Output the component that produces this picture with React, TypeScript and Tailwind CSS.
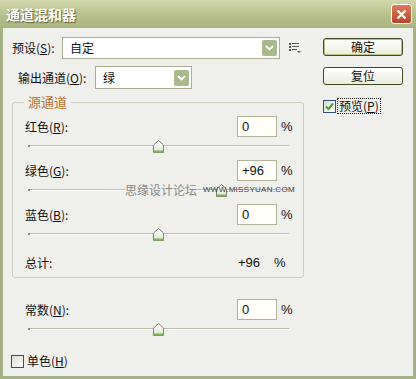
import React from "react";

const cjk = "font-['Noto_Sans_CJK_SC','Liberation_Sans',sans-serif]";
const latin = "font-['Liberation_Sans','DejaVu_Sans',sans-serif]";

const Key = ({ text, k }: { text: string; k: string }) => (
  <span>
    {text}(<span className="underline">{k}</span>):
  </span>
);

const Arrow = () => (
  <div className="mr-[2px] flex h-[16px] w-[15px] items-center justify-center rounded-[2px] bg-[#a8b98c]">
    <svg width="9" height="6" viewBox="0 0 9 6">
      <path d="M1 1 L4.5 4.5 L8 1" fill="none" stroke="#fff" strokeWidth="1.8" />
    </svg>
  </div>
);

const Select = ({ value, className }: { value: string; className: string }) => (
  <div className={`flex items-center justify-between border border-[#a9ae94] bg-white pl-[7px] ${className}`}>
    <span>{value}</span>
    <Arrow />
  </div>
);

const Thumb = () => (
  <svg width="11" height="13" viewBox="0 0 11 13">
    <defs>
      <linearGradient id="tg" x1="0" y1="0" x2="0" y2="1">
        <stop offset="0" stopColor="#ffffff" />
        <stop offset="1" stopColor="#dde4d2" />
      </linearGradient>
    </defs>
    <path d="M0.5 5 L5.5 0.5 L10.5 5 L10.5 12.5 L0.5 12.5 Z" fill="url(#tg)" stroke="#7c8670" />
    <rect x="1" y="10.5" width="9" height="2" fill="#7fb553" />
  </svg>
);

// value runs from -200 to +200, thumb sits at that fraction of the track
const Slider = ({ value, children }: { value: number; children?: React.ReactNode }) => {
  const pct = ((value + 200) / 400) * 100;
  return (
    <div className="relative mt-[3px] ml-[3px] h-[12px] w-[261px]">
      <div className="absolute left-0 right-0 top-[5px] h-[2px] border-b border-white bg-[#bdbdb0]" />
      <div className="absolute left-0 top-[5px] h-[2px] w-[2px] bg-[#888]" />
      <div className="absolute top-0" style={{ left: `calc(${pct}% - 5.5px)` }}>
        <Thumb />
      </div>
      {children}
    </div>
  );
};

const Input = ({ value }: { value: string }) => (
  <div className={`flex h-[21px] w-[40px] items-center border border-[#aeb397] bg-[#fffff8] pl-[4px] text-[13px] text-[#111] ${latin}`}>
    {value}
  </div>
);

const Row = ({ label, value, mt }: { label: React.ReactNode; value: string; mt: string }) => (
  <div className={`flex h-[21px] items-center ${mt}`}>
    <div className="flex-1">{label}</div>
    <Input value={value} />
    <span className={`ml-[4px] w-[14px] text-[13px] ${latin}`}>%</span>
  </div>
);

const CheckBox = ({ checked }: { checked?: boolean }) => (
  <div className="flex h-[13px] w-[13px] items-center justify-center border border-[#35506e] bg-linear-to-br from-[#dcdcd4] to-white">
    {checked && (
      <svg width="9" height="9" viewBox="0 0 9 9">
        <path d="M1 4.5 L3.5 7 L8 1.5" fill="none" stroke="#3da32e" strokeWidth="2" />
      </svg>
    )}
  </div>
);

const Button = ({ label, primary }: { label: string; primary?: boolean }) => (
  <div
    className={`flex h-[18px] w-[80px] items-center justify-center rounded-[3px] border border-[#3e4a22] bg-linear-to-b from-white to-[#ecebdc] text-[12px] ${
      primary ? "shadow-[inset_0_0_0_1px_#b3c486]" : ""
    }`}
  >
    {label}
  </div>
);

export default function App() {
  return (
    <div className={`flex h-[379px] w-[416px] flex-col text-[12px] text-[#111] ${cjk}`}>
      {/* title bar */}
      <div className="flex h-[28px] items-center justify-between bg-linear-to-b from-[#d3d9ad] via-[#b9c18f] to-[#aab37d] pl-[6px] pr-[4px]">
        <span className="text-[14px] font-bold text-white [text-shadow:1px_1px_1px_#5b6438]">通道混和器</span>
        <div className="flex h-[20px] w-[21px] items-center justify-center rounded-[3px] border border-white bg-linear-to-b from-[#e07b5c] to-[#b9442b]">
          <svg width="11" height="11" viewBox="0 0 11 11">
            <path d="M1.5 1.5 L9.5 9.5 M9.5 1.5 L1.5 9.5" stroke="#fff" strokeWidth="2.2" />
          </svg>
        </div>
      </div>

      <div className="flex flex-1 border-x-[3px] border-b-[3px] border-[#a7b083] bg-[#efefec]">
        {/* left column */}
        <div className="flex w-[301px] flex-col pl-[9px] pt-[9px]">
          <div className="flex h-[22px] items-center">
            <div className="w-[50px]">
              <Key text="预设" k="S" />
            </div>
            <Select value="自定" className="h-[22px] w-[218px]" />
            <svg className="ml-[9px]" width="13" height="11" viewBox="0 0 13 11">
              <g fill="#555">
                <rect x="0" y="0" width="2" height="2" />
                <rect x="3" y="0" width="7" height="1" />
                <rect x="0" y="3" width="2" height="2" />
                <rect x="3" y="3" width="7" height="1" />
                <rect x="0" y="6" width="2" height="2" />
                <rect x="3" y="6" width="5" height="1" />
                <path d="M8 8 L12 8 L10 10 Z" />
              </g>
            </svg>
          </div>

          <div className="mt-[7px] flex h-[23px] items-center pl-[6px]">
            <div className="w-[77px]">
              <Key text="输出通道" k="O" />
            </div>
            <Select value="绿" className="h-[23px] w-[97px]" />
          </div>

          <fieldset className="mt-[6px] w-[292px] rounded-[3px] border border-[#cdcdbd]">
            <legend className="ml-[11px] px-[4px] text-[13px] leading-[14px] text-[#b5752f]">源通道</legend>
            <div className="pl-[12px] pr-[8px] pt-[7px] pb-[4px]">
              <Row label={<Key text="红色" k="R" />} value="0" mt="" />
              <Slider value={0} />
              <Row label={<Key text="绿色" k="G" />} value="+96" mt="mt-[8px]" />
              <Slider value={96}>
                {/* forum watermark baked into the screenshot */}
                <span className="absolute left-[97px] top-[-4px] bg-[#efefec] leading-[20px] text-[#8a8a84]">
                  思缘设计论坛
                </span>
                <span
                  className={`absolute left-[175px] top-[1px] text-[8px] leading-[10px] tracking-[0.3px] text-[#3c3c3c] ${latin}`}
                >
                  WWW.MISSYUAN.COM
                </span>
              </Slider>
              <Row label={<Key text="蓝色" k="B" />} value="0" mt="mt-[8px]" />
              <Slider value={0} />
              <div className="mt-[12px] flex h-[21px] items-center">
                <div className="flex-1">总计:</div>
                <span className={`w-[36px] text-[13px] ${latin}`}>+96</span>
                <span className={`w-[21px] text-[13px] ${latin}`}>%</span>
              </div>
            </div>
          </fieldset>

          <div className="mt-[21px] w-[292px] pl-[13px] pr-[9px]">
            <Row label={<Key text="常数" k="N" />} value="0" mt="" />
            <Slider value={0} />
          </div>

          <div className="mt-[17px] -ml-[1px] flex items-center gap-[3px]">
            <CheckBox />
            <span>
              单色(<span className="underline">H</span>)
            </span>
          </div>
        </div>

        {/* right column */}
        <div className="ml-[19px] flex flex-col pt-[10px]">
          <Button label="确定" primary />
          <div className="mt-[11px]">
            <Button label="复位" />
          </div>
          <div className="mt-[14px] flex items-center gap-[2px]">
            <CheckBox checked />
            <span className="px-[1px] leading-[14px] outline-1 outline-dotted outline-[#222]">
              预览(<span className="underline">P</span>)
            </span>
          </div>
        </div>
      </div>
    </div>
  );
}
